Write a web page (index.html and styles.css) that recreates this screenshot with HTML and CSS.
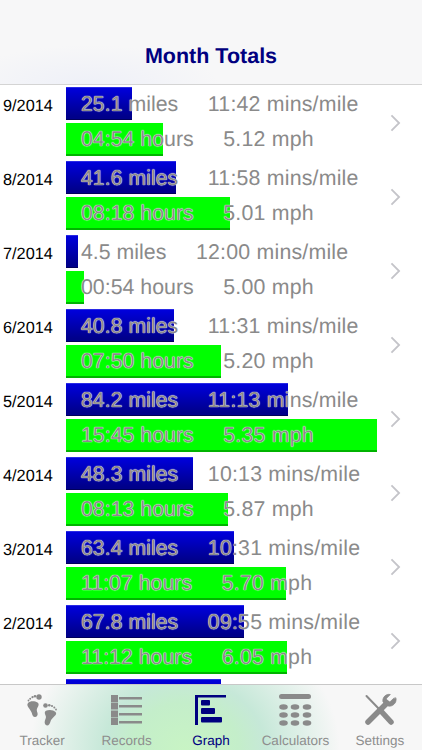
FILE: index.html
```html
<!DOCTYPE html>
<html lang="en">
<head>
<meta charset="utf-8">
<title>Month Totals</title>
<link rel="stylesheet" href="styles.css">
</head>
<body>
<div class="screen">
  <header class="nav"><h1>Month Totals</h1></header>
  <main class="list">
    <section class="row"><div class="date">9/2014</div><div class="lines">
      <div class="line"><i class="bar blue" style="width:66px"></i><span class="txt">25.1 miles     <b>11:42 mins/mile</b></span></div>
      <div class="line"><i class="bar green" style="width:97px"></i><span class="txt">04:54 hours     <b>5.12 mph</b></span></div>
    </div><svg class="chev" viewBox="0 0 12 20"><path d="M1.5 1.5 10 10l-8.500 8.500"/></svg></section>
    <section class="row"><div class="date">8/2014</div><div class="lines">
      <div class="line"><i class="bar blue" style="width:110px"></i><span class="txt">41.6 miles     <b>11:58 mins/mile</b></span></div>
      <div class="line"><i class="bar green" style="width:164px"></i><span class="txt">08:18 hours     <b>5.01 mph</b></span></div>
    </div><svg class="chev" viewBox="0 0 12 20"><path d="M1.5 1.5 10 10l-8.500 8.500"/></svg></section>
    <section class="row"><div class="date">7/2014</div><div class="lines">
      <div class="line"><i class="bar blue" style="width:12px"></i><span class="txt">4.5 miles     <b>12:00 mins/mile</b></span></div>
      <div class="line"><i class="bar green" style="width:18px"></i><span class="txt">00:54 hours     <b>5.00 mph</b></span></div>
    </div><svg class="chev" viewBox="0 0 12 20"><path d="M1.5 1.5 10 10l-8.500 8.500"/></svg></section>
    <section class="row"><div class="date">6/2014</div><div class="lines">
      <div class="line"><i class="bar blue" style="width:108px"></i><span class="txt">40.8 miles     <b>11:31 mins/mile</b></span></div>
      <div class="line"><i class="bar green" style="width:155px"></i><span class="txt">07:50 hours     <b>5.20 mph</b></span></div>
    </div><svg class="chev" viewBox="0 0 12 20"><path d="M1.5 1.5 10 10l-8.500 8.500"/></svg></section>
    <section class="row"><div class="date">5/2014</div><div class="lines">
      <div class="line"><i class="bar blue" style="width:222px"></i><span class="txt">84.2 miles     <b>11:13 mins/mile</b></span></div>
      <div class="line"><i class="bar green" style="width:311px"></i><span class="txt">15:45 hours     <b>5.35 mph</b></span></div>
    </div><svg class="chev" viewBox="0 0 12 20"><path d="M1.5 1.5 10 10l-8.500 8.500"/></svg></section>
    <section class="row"><div class="date">4/2014</div><div class="lines">
      <div class="line"><i class="bar blue" style="width:127px"></i><span class="txt">48.3 miles     <b>10:13 mins/mile</b></span></div>
      <div class="line"><i class="bar green" style="width:162px"></i><span class="txt">08:13 hours     <b>5.87 mph</b></span></div>
    </div><svg class="chev" viewBox="0 0 12 20"><path d="M1.5 1.5 10 10l-8.500 8.500"/></svg></section>
    <section class="row"><div class="date">3/2014</div><div class="lines">
      <div class="line"><i class="bar blue" style="width:168px"></i><span class="txt">63.4 miles     <b>10:31 mins/mile</b></span></div>
      <div class="line"><i class="bar green" style="width:220px"></i><span class="txt">11:07 hours     <b>5.70 mph</b></span></div>
    </div><svg class="chev" viewBox="0 0 12 20"><path d="M1.5 1.5 10 10l-8.500 8.500"/></svg></section>
    <section class="row"><div class="date">2/2014</div><div class="lines">
      <div class="line"><i class="bar blue" style="width:178px"></i><span class="txt">67.8 miles     <b>09:55 mins/mile</b></span></div>
      <div class="line"><i class="bar green" style="width:221px"></i><span class="txt">11:12 hours     <b>6.05 mph</b></span></div>
    </div><svg class="chev" viewBox="0 0 12 20"><path d="M1.5 1.5 10 10l-8.500 8.500"/></svg></section>
    <section class="row"><div class="date"></div><div class="lines">
      <div class="line"><i class="bar blue" style="width:155px"></i></div>
    </div></section>
  </main>
  <nav class="tabs">
    <a class="tab">
      <svg class="ico" viewBox="0 0 40 36"><g fill="#8a8a8a">
        <circle cx="17" cy="5" r="2.700"/><circle cx="13" cy="4.200" r="1.300"/><circle cx="10.500" cy="5.200" r="1.100"/><circle cx="8.200" cy="6.800" r="1"/><circle cx="6.500" cy="8.500" r=".9"/>
        <path d="M6 11c2-2.200 7-2 9.500-.4 2 1.300 1 3.700-.2 5.500-1 1.700-.3 3.400.2 5 .6 2-.6 4-2.500 4-2 0-2.700-2-3.200-4C9 17.500 3.500 14 6 11z"/>
        <circle cx="23.500" cy="13.500" r="2.300"/><circle cx="27.300" cy="13.200" r="1.300"/><circle cx="30" cy="14" r="1.100"/><circle cx="32.300" cy="15.500" r="1"/><circle cx="34" cy="17.500" r=".9"/>
        <path d="M33.500 20c-1.900-2.400-7-2.700-9.500-1.200-2 1.200-1 3.400-.2 5.300.6 1.600-.6 3.200-1 5-.5 2.300.4 4.400 2.300 4.400s2.800-1.800 3.400-4c1-3.800 7.800-6.700 5-9.500z"/>
      </g></svg>
      <span>Tracker</span>
    </a>
    <a class="tab">
      <svg class="ico" viewBox="0 0 40 36"><g fill="#8a8a8a">
        <rect x="4" y="3" width="7" height="7"/><rect x="4" y="10.500" width="7" height="7"/><rect x="4" y="18.500" width="7" height="7"/><rect x="4" y="26" width="7" height="7"/>
        <rect x="12" y="5" width="23" height="2.500"/><rect x="12" y="13" width="23" height="2.500"/><rect x="12" y="21" width="23" height="2.500"/><rect x="12" y="29" width="23" height="2.500"/>
      </g></svg>
      <span>Records</span>
    </a>
    <a class="tab on">
      <svg class="ico" viewBox="0 0 40 36"><g fill="#000080">
        <rect x="4" y="3" width="3" height="30"/><rect x="4" y="3" width="31" height="2.500"/>
        <rect x="10" y="8" width="9" height="5.500" rx="1"/><rect x="10" y="16" width="14" height="6" rx="1"/><rect x="10" y="25" width="21" height="5.500" rx="1"/>
      </g></svg>
      <span>Graph</span>
    </a>
    <a class="tab">
      <svg class="ico" viewBox="0 0 40 36"><g fill="#8a8a8a">
        <rect x="4" y="2" width="32" height="5" rx="2.500"/>
        <ellipse cx="8.500" cy="15" rx="4.300" ry="2.800"/><ellipse cx="20" cy="15" rx="4.300" ry="2.800"/><ellipse cx="32" cy="15" rx="4.300" ry="2.800"/>
        <ellipse cx="8.500" cy="23" rx="4.300" ry="2.800"/><ellipse cx="20" cy="23" rx="4.300" ry="2.800"/><ellipse cx="32" cy="23" rx="4.300" ry="2.800"/>
        <ellipse cx="8.500" cy="31" rx="4.300" ry="2.800"/><ellipse cx="20" cy="31" rx="4.300" ry="2.800"/><ellipse cx="32" cy="31" rx="4.300" ry="2.800"/>
      </g></svg>
      <span>Calculators</span>
    </a>
    <a class="tab">
      <svg class="ico" viewBox="0 0 40 36"><g fill="none" stroke="#8a8a8a" stroke-linecap="round">
        <path d="M6.500 4 21 19" stroke-width="2"/><path d="M20 18 31 30" stroke-width="5.500"/>
        <path d="M8 30 27 11" stroke-width="5.500"/>
        <path d="M33.500 6.500 29.800 10 27 8.800 26.500 6.300 30.300 2.500C26 1.500 22 5.500 23 10l5 4c4.500 1 9-3 8-7.800z" fill="#8a8a8a" stroke="#8a8a8a" stroke-width=".8"/>
      </g></svg>
      <span>Settings</span>
    </a>
  </nav>
</div>
</body>
</html>
```
FILE: styles.css
```css
* { box-sizing: border-box; }
html, body { margin: 0; padding: 0; }
body { width: 422px; height: 750px; overflow: hidden; background: #fff; font-family: "Liberation Sans", Arial, sans-serif; text-rendering: geometricPrecision; }
.screen { width: 422px; height: 750px; display: flex; flex-direction: column; overflow: hidden; }
.nav {
  flex: 0 0 85px; display: flex; align-items: flex-end; justify-content: center; padding-bottom: 15px;
  background: radial-gradient(ellipse 130px 40px at 90px 85px, #eef0f8, rgba(247,247,248,0)), #f7f7f8;
  border-bottom: 1px solid #d4d4d4;
}
.nav h1 { margin: 0; font-size: 21.500px; line-height: 26px; font-weight: 700; color: #000080; }
.list { flex: 1 1 0; min-height: 0; overflow: hidden; }
.row { height: 74px; padding-top: 2px; display: flex; position: relative; }
.date { flex: 0 0 66px; padding: 10px 0 0 3px; font-size: 16.300px; line-height: 18px; color: #000; }
.lines { flex: 1; display: flex; flex-direction: column; gap: 3px; }
.line { position: relative; height: 33px; display: flex; align-items: center; }
.line + .line { padding-bottom: 2px; }
.bar { position: absolute; left: 0; top: 0; bottom: 0; display: block; }
.blue { background: linear-gradient(#0000dc, #0000b4 45%, #00008a 92%); border-top: 1px solid #2a2ae6; border-bottom: 1px solid #00005a; }
.green { background: #00ff00; border-bottom: 2px solid #00b400; }
.txt { position: relative; padding-left: 15px; font-size: 21.330px; line-height: 26px; color: #8a8a8a; white-space: pre; text-shadow: 0 0 1px #fff, 0 0 1px #fff; }
.txt b { font-weight: 400; letter-spacing: .2px; }
.chev { flex: none; width: 11px; height: 18px; margin: 26.500px 21px 0 8px; align-self: flex-start; fill: none; stroke: #c4c4c9; stroke-width: 2; }
.tabs {
  flex: 0 0 66px; display: grid; grid-template-columns: repeat(5, 1fr); border-top: 1px solid #c8c8c8;
  background:
    radial-gradient(ellipse 155px 135px at 185px 100%, #c8f4c4 0%, #c4eeca 35%, #c6e8d8 52%, rgba(247,247,247,0) 100%),
    #f7f7f7;
}
.tab { display: flex; flex-direction: column; align-items: center; padding-top: 7px; color: #8e8e8e; font-size: 13.500px; line-height: 16px; }
.tab span { margin-top: 5px; }
.tab.on { color: #000080; }
.ico { width: 40px; height: 36px; display: block; }
```
